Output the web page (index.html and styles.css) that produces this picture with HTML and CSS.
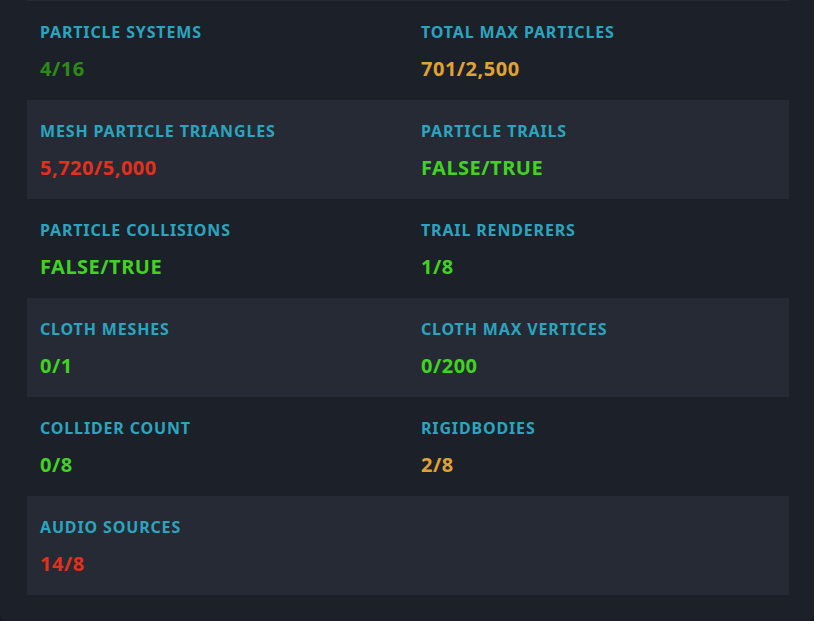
FILE: index.html
```html
<!DOCTYPE html>
<html>
<head>
<meta charset="utf-8">
<link rel="stylesheet" href="styles.css">
</head>
<body>
<div class="panel">
  <div class="stats">
    <div class="row">
      <div class="cell"><div class="label">Particle Systems</div><div class="value ok-dim">4/16</div></div>
      <div class="cell"><div class="label">Total Max Particles</div><div class="value warn">701/2,500</div></div>
    </div>
    <div class="row alt">
      <div class="cell"><div class="label">Mesh Particle Triangles</div><div class="value bad">5,720/5,000</div></div>
      <div class="cell"><div class="label">Particle Trails</div><div class="value ok">FALSE/TRUE</div></div>
    </div>
    <div class="row">
      <div class="cell"><div class="label">Particle Collisions</div><div class="value ok">FALSE/TRUE</div></div>
      <div class="cell"><div class="label">Trail Renderers</div><div class="value ok">1/8</div></div>
    </div>
    <div class="row alt">
      <div class="cell"><div class="label">Cloth Meshes</div><div class="value ok">0/1</div></div>
      <div class="cell"><div class="label">Cloth Max Vertices</div><div class="value ok">0/200</div></div>
    </div>
    <div class="row">
      <div class="cell"><div class="label">Collider Count</div><div class="value ok">0/8</div></div>
      <div class="cell"><div class="label">Rigidbodies</div><div class="value warn">2/8</div></div>
    </div>
    <div class="row alt">
      <div class="cell"><div class="label">Audio Sources</div><div class="value bad">14/8</div></div>
      <div class="cell"></div>
    </div>
  </div>
</div>
</body>
</html>
```

FILE: styles.css
```css
html, body {
  margin: 0;
  padding: 0;
  background: #14171d;
  height: 100%;
}
body {
  font-family: "Noto Sans", "DejaVu Sans", sans-serif;
  overflow: hidden;
}
.panel {
  background: #1c2029;
  height: 621px;
  box-sizing: border-box;
  border-radius: 0 0 6px 6px;
  padding: 0 25px 0 27px;
}
.stats {
  border-top: 1px solid #262a35;
}
.row {
  display: grid;
  grid-template-columns: 1fr 1fr;
  height: 99px;
}
.row.alt {
  background: #262a35;
}
.cell {
  padding: 21px 13px 0;
}
.label {
  color: #2ba5bf;
  font-size: 16px;
  font-weight: 700;
  line-height: 20px;
  text-transform: uppercase;
  letter-spacing: 0.85px;
}
.value {
  margin-top: 14px;
  font-size: 20px;
  font-weight: 700;
  line-height: 26px;
  letter-spacing: 0.5px;
}
.ok-dim { color: #2a8c16; }
.ok { color: #41d222; }
.warn { color: #e0a332; }
.bad { color: #e2301b; }
```
